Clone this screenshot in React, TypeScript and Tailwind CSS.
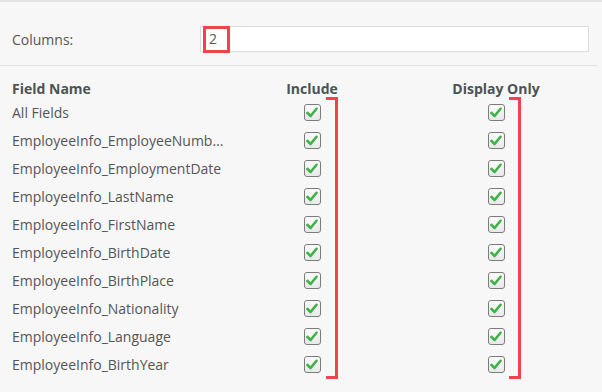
import React from 'react';

const fields = [
  'All Fields',
  'EmployeeInfo_EmployeeNumber',
  'EmployeeInfo_EmploymentDate',
  'EmployeeInfo_LastName',
  'EmployeeInfo_FirstName',
  'EmployeeInfo_BirthDate',
  'EmployeeInfo_BirthPlace',
  'EmployeeInfo_Nationality',
  'EmployeeInfo_Language',
  'EmployeeInfo_BirthYear',
];

function CheckBox() {
  return (
    <span className="flex h-[17px] w-[17px] items-center justify-center rounded-[3px] border-[1.5px] border-[#7b7b7b] bg-gradient-to-b from-[#fbfbfb] to-[#e9e9e9]">
      <svg width="12" height="11" viewBox="0 0 12 11">
        <path d="M1.5 6 L4.6 9 L10.5 1.8" fill="none" stroke="#3fb24a" strokeWidth="2.6" strokeLinecap="round" strokeLinejoin="round" />
      </svg>
    </span>
  );
}

// red annotation bracket drawn over the checkbox column
function Bracket({ left }: { left: number }) {
  return (
    <div
      className="absolute top-[97px] h-[282px] w-[12px] border-y-[3px] border-r-[3px] border-[#f2424a]"
      style={{ left }}
    />
  );
}

export default function App() {
  return (
    <div className="relative h-[392px] w-[602px] overflow-hidden bg-[#f7f7f7] text-[14px] text-[#555] [font-family:'Open_Sans',sans-serif]">
      <div className="border-t-2 border-[#e4e4e4] pt-[24px]">
        <div className="flex items-center pl-3">
          <span className="w-[188px]">Columns:</span>
          <div className="relative h-[26px] w-[389px] border border-[#dcdcdc] bg-white pl-[8px] leading-[24px] text-[14px]">
            2
            <div className="absolute left-[2px] top-[-1px] h-[27px] w-[27px] border-[3px] border-[#f2424a]" />
          </div>
        </div>
        <div className="mt-[13px] h-px w-[598px] bg-[#e2e2e2]" />
      </div>

      <div className="pt-[12px]">
        <div className="flex h-[20px] items-center font-bold text-[#4b5454]">
          <span className="w-[224px] pl-3">Field Name</span>
          <span className="w-[176px] text-center">Include</span>
          <span className="w-[192px] text-center">Display Only</span>
        </div>
        {fields.map((f) => (
          <div key={f} className="flex h-[28px] items-center">
            <span className="w-[224px] pl-3">
              <span className="block w-[212px] truncate">{f}</span>
            </span>
            <span className="flex w-[176px] justify-center">
              <CheckBox />
            </span>
            <span className="flex w-[192px] justify-center">
              <CheckBox />
            </span>
          </div>
        ))}
      </div>

      <Bracket left={326} />
      <Bracket left={509} />
    </div>
  );
}
